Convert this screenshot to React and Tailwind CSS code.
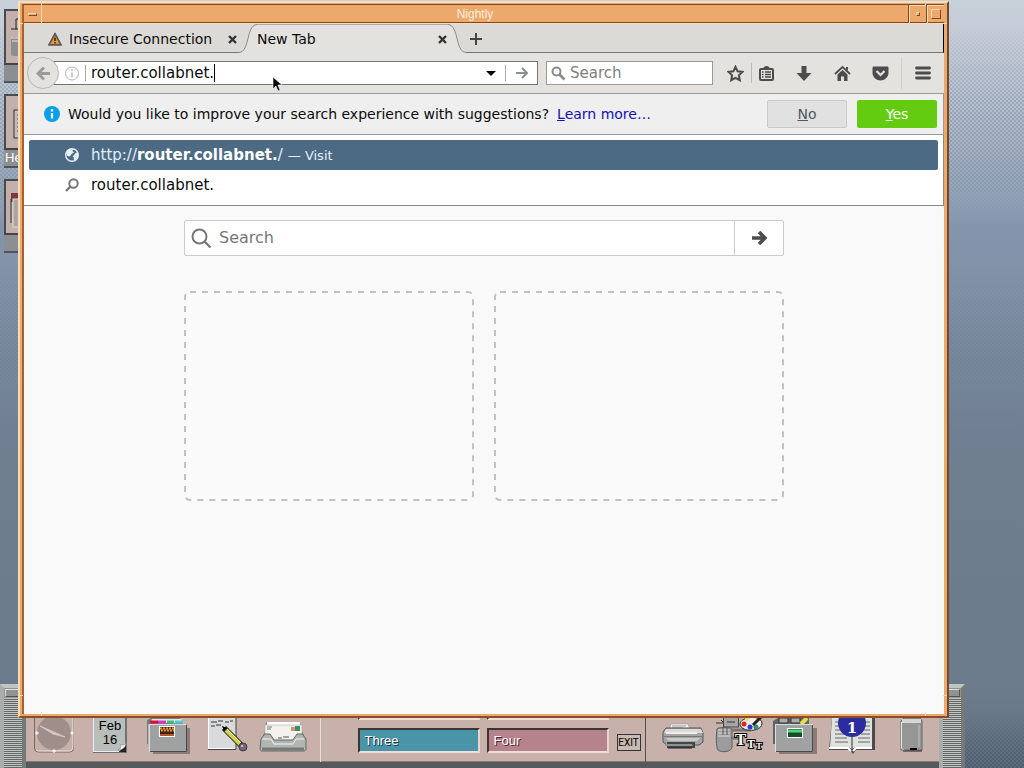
import { useState } from "react";

const Notch = ({ className }) => <span className={`absolute bg-[#fbdcb8] ${className}`} />;

const Desktop = () => (
  <>
    <div className="absolute inset-0 bg-[linear-gradient(#c8d0da_0px,#c4cbd6_40px,#bac3d1_90px,#a9b5c6_140px,#93a3b7_195px,#8494ad_225px,#8393aa_262px,#7b8b9f_340px,#707f93_430px,#6f7e8e_480px,#6c7b8b_700px,#5d6c7b_768px)]" />
    <div className="absolute inset-x-0 top-6 h-48 bg-[conic-gradient(#73849b_25%,transparent_0_50%,#73849b_0_75%,transparent_0)] bg-size-[4px_4px] opacity-40 mask-[linear-gradient(transparent,black_40%,black_80%,transparent)]" />
    <div className="absolute inset-x-0 top-[264px] h-[170px] bg-[conic-gradient(#6c7c92_25%,transparent_0_50%,#6c7c92_0_75%,transparent_0)] bg-size-[4px_4px] opacity-40 mask-[linear-gradient(transparent,black_50%,transparent)]" />
    <div className="absolute inset-x-0 bottom-0 h-[52px] bg-[conic-gradient(#3d4c5b_25%,transparent_0_50%,#3d4c5b_0_75%,transparent_0)] bg-size-[4px_4px] opacity-50 mask-[linear-gradient(transparent,black)]" />
  </>
);

const shortcuts = [
  {
    id: "printer",
    label: "",
    art: (
      <>
        <path d="M10 18V8h8v10M5 18h13" fill="none" stroke="#222" />
        <rect x="5" y="26" width="14" height="19" rx="2" fill="#8f8f8f" />
        <path d="M5 27h14M6 30h10" stroke="#e6e6e6" />
      </>
    ),
  },
  {
    id: "help",
    label: "He",
    art: (
      <>
        <rect x="8" y="14" width="14" height="28" fill="#c4bcb8" stroke="#333" />
        <path d="M11 19h9M11 23h9M11 27h9M11 31h9M11 35h9" stroke="#555" />
      </>
    ),
  },
  {
    id: "trash",
    label: "",
    art: (
      <>
        <rect x="5" y="12" width="15" height="9" fill="#7d3a3d" />
        <rect x="7" y="18" width="14" height="28" fill="#aaa5a1" stroke="#ddd" />
        <path d="M5 18v24" stroke="#333" />
      </>
    ),
  },
];

const DesktopIcons = () => (
  <div className="absolute top-[9px] left-1 flex w-20 flex-col gap-[11px]">
    {shortcuts.map((item) => (
      <div key={item.id}>
        <div className="h-14 border-2 border-t-[#4b4b4d] border-r-[#eee] border-b-[#444] border-l-[#4b4b4d] bg-[#c3afab]">
          <svg className="h-full w-6" viewBox="0 0 24 52">
            {item.art}
          </svg>
        </div>
        <div className="h-[18px] border-b-2 border-[#4b5560] bg-[#8c8f91] pl-px text-[13px] leading-4 text-white">
          {item.label}
        </div>
      </div>
    ))}
  </div>
);

const ClockIcon = () => (
  <svg width="57" height="44" viewBox="0 0 57 44">
    <rect x="8.500" y="-6" width="39" height="40" rx="4" fill="#c6b0aa" stroke="#7e6460" />
    <path d="M10 32c1 1 3 1 4 1h29c3 0 4-2 4-4V0" fill="none" stroke="#efe0da" />
    <circle cx="28" cy="15" r="17" fill="#9f8e89" />
    <path d="M14 8l14 6 11 5-12-3z" fill="#cfc8c4" stroke="#cfc8c4" />
    <path d="M9 15h4M11 13v4M44 15h4M46 13v4M26 33h4M28 31v4" stroke="#fff" />
  </svg>
);

const CalendarIcon = () => (
  <svg width="57" height="44" viewBox="0 0 57 44">
    <path d="M10 0h34v35H10z" fill="#6f7372" />
    <path d="M10 0h32v33H10z" fill="#b9bdbb" />
    <path d="M10.500 0v33M10 33.500h26" stroke="#eee" />
    <path d="M36 34l7-8v8z" fill="#222" />
    <path d="M35 32c3-1 3-4 2-5 3 0 5 0 6-2 0 4-3 7-8 7z" fill="#f2f2f2" stroke="#777" strokeWidth=".5" />
    <text x="27" y="12" textAnchor="middle" fontSize="13" fill="#000">Feb</text>
    <text x="27" y="26" textAnchor="middle" fontSize="13" fill="#000">16</text>
  </svg>
);

const FileIcon = () => (
  <svg width="57" height="44" viewBox="0 0 57 44">
    <path d="M13 10h37v26H13z" fill="#8e7b77" />
    <path d="M7 2l4-2h29l3 6H8v20H7z" fill="#777b7a" />
    <path d="M12 1h29l2 4H10z" fill="#e8e8e4" />
    <path d="M10 4h8" stroke="#d3123a" strokeWidth="3" />
    <path d="M18 4h8" stroke="#d636c8" strokeWidth="3" />
    <path d="M27 4h7" stroke="#35c27b" strokeWidth="3" />
    <path d="M35 4h8" stroke="#4ccbd8" strokeWidth="3" />
    <path d="M9 6h38v28H9z" fill="#9fa2a1" />
    <path d="M9.500 34V6.500H46" fill="none" stroke="#dcdcdc" />
    <path d="M10 33.500h36.500V7" fill="none" stroke="#4a4a4a" />
    <rect x="19.500" y="8.500" width="15" height="10" fill="#3a2313" stroke="#fff" />
    <path d="M20 10.500h14" stroke="#ec9b35" strokeWidth="2" strokeDasharray="2 1" />
    <path d="M21 12.500h13" stroke="#ec9b35" strokeWidth="2" strokeDasharray="2 1" />
    <path d="M20 17h14" stroke="#b7572a" strokeWidth="2" />
  </svg>
);

const NoteIcon = () => (
  <svg width="57" height="44" viewBox="0 0 57 44">
    <path d="M11 0h28v31H11z" fill="#d9dadb" />
    <path d="M11.500 0v30.500H38" fill="none" stroke="#fff" />
    <path d="M11 31.500h28V0" fill="none" stroke="#444" />
    <path d="M14 4h6m1-1h5m2 1h4m1-1h3M14 8h4m1-1h5" stroke="#333" />
    <path d="M27 10l20 20" stroke="#222" strokeWidth="6" />
    <path d="M29 12l14 14" stroke="#d2d04c" strokeWidth="4" />
    <path d="M30 11l14 14" stroke="#f9f7a0" strokeWidth="1" />
    <path d="M25 8l5 2-3 3z" fill="#000" />
    <circle cx="46" cy="29" r="4" fill="#77657c" stroke="#443947" />
    <circle cx="45" cy="28" r="1" fill="#ddd" />
  </svg>
);

const MailIcon = () => (
  <svg width="57" height="44" viewBox="0 0 57 44">
    <path d="M12 4h34l4 16H10z" fill="#8d8f8d" />
    <path d="M13 4h33v4H13z" fill="#fff" />
    <path d="M11 7h37v20H11z" fill="#f3f2ec" stroke="#999" strokeWidth=".5" />
    <path d="M13 9h5M13 11h4" stroke="#777" />
    <path d="M37 9h4v4h-4z" fill="#d79175" />
    <path d="M41 8h5v5h-5z" fill="#3a9166" />
    <path d="M7 21l3-4v-1h6l4 6h19l4-6h6v1l3 4v10c0 1-1 2-2 2H8c-1 0-2-1-2-2z" fill="#b2b6b2" stroke="#626662" />
    <path d="M8 31h42" stroke="#777b78" strokeWidth="3" />
    <path d="M8 21h9l3 5h19l3-5h8" fill="none" stroke="#f0f2ef" />
    <path d="M24 20h4m1-1h6" stroke="#555" />
  </svg>
);

const PrinterIcon = () => (
  <svg width="57" height="44" viewBox="0 0 57 44">
    <path d="M17 6h17l2 6H15z" fill="#f4f2ef" stroke="#888" strokeWidth=".5" />
    <path d="M18 8h14M18 10h11" stroke="#999" />
    <path d="M12 10h35l2 5v9l-4 3H13l-4-3V14z" fill="#a4a6a5" stroke="#555" />
    <path d="M12 11h35l2 4H10z" fill="#dadbd8" />
    <path d="M12 15h31" stroke="#eee" strokeWidth="2" />
    <path d="M10 18.500h38" stroke="#777" />
    <path d="M12 20h34l-3 3H15z" fill="#c9cac8" />
    <path d="M13 24h28v6H13z" fill="#454646" />
    <path d="M12 26h26l1 2H11z" fill="#8f9190" />
    <path d="M14 30h24" stroke="#222" />
  </svg>
);

const StyleIcon = () => (
  <svg width="57" height="44" viewBox="0 0 57 44">
    <path d="M5 5h8M10 2l3 3" stroke="#333" fill="none" />
    <rect x="12.500" y="-4" width="15" height="13" fill="#a5a6a4" stroke="#444" />
    <path d="M16 4h8" stroke="#333" />
    <path d="M6 11c0-2 15-2 15 0v18c0 5-11 6-14 3-2-2-2-16-1-21z" fill="#9b9c9b" stroke="#5c5c5c" />
    <path d="M7 12h12M7 15h12M7 18h12" stroke="#ddd" />
    <path d="M12 10v7M16 10v7" stroke="#555" />
    <path d="M20 12h20M20 20h8" stroke="#777" strokeWidth="3" />
    <path d="M29 6C29-1 50-4 51 5c0 7-10 8-15 7-4-1-7-3-7-6z" fill="#eeeae4" stroke="#222" />
    <circle cx="33" cy="6" r="2.500" fill="#d92828" />
    <circle cx="39" cy="9" r="2.500" fill="#2938ce" />
    <circle cx="45" cy="9" r="2.500" fill="#278f75" />
    <circle cx="36" cy="1" r="2" fill="#ece25a" />
    <path d="M42 7l9-9" stroke="#222" strokeWidth="3" />
    <g fontFamily="'Liberation Serif', serif" fontWeight="bold" fill="#fff" stroke="#000" strokeWidth="2" paintOrder="stroke">
      <text x="24" y="27" fontSize="17">T</text>
      <text x="36" y="30" fontSize="12">T</text>
      <text x="45" y="31" fontSize="9">T</text>
    </g>
  </svg>
);

const AppsIcon = () => (
  <svg width="57" height="44" viewBox="0 0 57 44">
    <path d="M11 10h38v26H11z" fill="#8e7b77" />
    <path d="M5 3l5-3h31v6H7v20H5z" fill="#606463" />
    <path d="M11 0h9v5h-9zM23 0h9v5h-9z" fill="#a9adab" stroke="#333" />
    <path d="M33 6l6-6" stroke="#e2df4a" strokeWidth="4" />
    <path d="M7 6h38v28H7z" fill="#9fa2a1" />
    <path d="M7.500 34V6.500H45" fill="none" stroke="#dcdcdc" />
    <path d="M8 33.500h36.500V7" fill="none" stroke="#4a4a4a" />
    <rect x="19.500" y="10.500" width="15" height="9" fill="#174b2c" stroke="#fff" />
    <path d="M20 13h14" stroke="#4fd87a" strokeWidth="3" />
  </svg>
);

const HelpIcon = () => (
  <svg width="57" height="44" viewBox="0 0 57 44">
    <path d="M7 0h43v32H31l-3 4-3-4H4z" fill="#494c4b" />
    <path d="M7 0h40v29H31l-4 2-4-2H5z" fill="#dfe3df" />
    <path d="M4 30h19l3 3M47 30H31l-3 3" fill="none" stroke="#fff" strokeWidth="2" />
    <path d="M10 4h6M10 8h6M10 12h7M10 16h10M10 20h12M10 24h13M39 4h6M39 8h6M38 12h7M36 16h9M33 20h12M33 24h12" stroke="#666" />
    <path d="M27 17v15" stroke="#333" />
    <circle cx="27" cy="5" r="14" fill="#2a2ca0" />
    <text x="27" y="15" textAnchor="middle" fontFamily="'DejaVu Serif', serif" fontWeight="bold" fontSize="15" fill="#fff">1</text>
  </svg>
);

const TrashIcon = () => (
  <svg width="57" height="44" viewBox="0 0 57 44">
    <path d="M19 3l3-3h16l2 3v29H19z" fill="#949796" stroke="#666" />
    <path d="M20 3h19" stroke="#d6d6d2" strokeWidth="4" />
    <path d="M19.500 4v26l3 3" fill="none" stroke="#e6e6e2" />
    <path d="M37 7v22" stroke="#bfc1c0" />
    <path d="M28 31h7" stroke="#000" strokeWidth="2" />
    <path d="M21 33h19" stroke="#222" />
  </svg>
);

const leftTools = [
  { name: "Clock", Icon: ClockIcon },
  { name: "Calendar", Icon: CalendarIcon },
  { name: "File Manager", Icon: FileIcon },
  { name: "Text Editor", Icon: NoteIcon },
  { name: "Mailer", Icon: MailIcon },
];

const rightTools = [
  { name: "Printers", Icon: PrinterIcon },
  { name: "Style Manager", Icon: StyleIcon },
  { name: "Applications", Icon: AppsIcon },
  { name: "Help", Icon: HelpIcon },
  { name: "Trash", Icon: TrashIcon },
];

const Tools = ({ items }) => (
  <div className="flex">
    {items.map(({ name, Icon }) => (
      <button key={name} aria-label={name}>
        <Icon />
      </button>
    ))}
  </div>
);

const Handle = () => (
  <div className="flex h-full w-[26px] flex-col border-x-4 border-t-4 border-t-[#c1c5c4] border-r-[#747979] border-l-[#a9adac] bg-[#8f9392]">
    <div className="m-px h-2 border border-t-[#ddd] border-r-[#555] border-b-[#555] border-l-[#ddd]" />
    <div className="flex-1 bg-[repeating-linear-gradient(#c3c7c6_0_1px,#626766_1px_2px)]" />
  </div>
);

const bevel = "border-2 border-t-[#3d3532] border-l-[#3d3532] border-r-[#e8d5ce] border-b-[#f0dfd9]";

const FrontPanel = () => (
  <div className="absolute bottom-0 left-0 flex h-[84px] w-[965px] items-end">
    <Handle />
    <div className="flex h-full flex-1 items-end justify-between border-b-[6px] border-[#55595a] bg-[#c8b1aa] shadow-[inset_0_-1px_#8d7a75]">
      <Tools items={leftTools} />
      <div className="flex h-full items-end border-x border-l-[#eadbd5] border-r-[#594b47]">
        <div className="grid grid-cols-2 gap-x-[7px] gap-y-2 pb-[9px] pl-[37px]">
          <div className={`h-6 w-[122px] bg-[#8a7f65] ${bevel}`} />
          <div className={`h-6 w-[122px] bg-[#8a7f65] ${bevel}`} />
          <button className={`h-[25px] w-[122px] bg-[#4994a7] pl-[5px] text-left text-[13px] leading-5 text-white text-shadow-[1px_1px_#234] ${bevel}`}>
            Three
          </button>
          <button className={`h-[25px] w-[122px] bg-[#b5838c] pl-[5px] text-left text-[13px] leading-5 text-white text-shadow-[1px_1px_#523] ${bevel}`}>
            Four
          </button>
        </div>
        <button className="mr-1 mb-[11px] ml-2 h-[17px] w-6 border border-[#333] bg-[#c8b9b3] text-center font-['Roboto',sans-serif] text-[10px] leading-[15px] text-black">
          EXIT
        </button>
      </div>
      <Tools items={rightTools} />
    </div>
    <Handle />
  </div>
);

const titleButton = "flex h-full w-[18px] items-center justify-center border-l border-[#7d4a24] shadow-[inset_1px_1px_#fbdcb8]";

const TitleBar = () => (
  <div className="flex h-[19px] items-center border-b border-[#fbdcb8] bg-[#eda86c] shadow-[inset_0_-1px_#7d4a24]">
    <button aria-label="Window menu" className="flex h-full w-[18px] items-center justify-center border-r border-[#fbdcb8]">
      <span className="h-[3px] w-[9px] border border-t-[#fbdcb8] border-r-[#7d4a24] border-b-[#7d4a24] border-l-[#fbdcb8]" />
    </button>
    <h1 className="flex-1 text-center text-[12px] leading-4 text-[#fdf0dc]">Nightly</h1>
    <button aria-label="Minimize" className={titleButton}>
      <span className="size-1 border border-t-[#fbdcb8] border-r-[#7d4a24] border-b-[#7d4a24] border-l-[#fbdcb8]" />
    </button>
    <button aria-label="Maximize" className={titleButton}>
      <span className="size-[10px] border border-t-[#fbdcb8] border-r-[#7d4a24] border-b-[#7d4a24] border-l-[#fbdcb8]" />
    </button>
  </div>
);

const CloseIcon = () => (
  <svg width="9" height="9" viewBox="0 0 9 9">
    <path d="M1 1l7 7M8 1l-7 7" stroke="#333" strokeWidth="2.400" />
  </svg>
);

const TabStrip = () => (
  <div className="flex h-[29px] bg-[#dcdad6] text-sm">
    <div className="flex w-[215px] items-center border-b border-[#777] pt-0.5 pl-6">
      <svg width="14" height="14" viewBox="0 0 14 14">
        <path d="M7 .8L13.600 13.200H.4z" fill="#5d5a55" stroke="#5d5a55" strokeLinejoin="round" />
        <path d="M7 3.500L11.500 12h-9z" fill="#f0953a" />
        <path d="M7 5.500v3.500M7 10v1.500" stroke="#3c2a1a" strokeWidth="1.600" />
      </svg>
      <span className="ml-[7px] flex-1 whitespace-nowrap">Insecure Connection</span>
      <button aria-label="Close Insecure Connection" className="mr-0.5">
        <CloseIcon />
      </button>
    </div>
    <svg width="18" height="29" viewBox="0 0 18 29">
      <path d="M0 28.500C11 28 7 1 18 .5V29H0z" fill="#e4e2df" />
      <path d="M0 28.500C11 28 7 1 18 .5" fill="none" stroke="#8a8a88" />
    </svg>
    <div className="flex w-[191px] items-center justify-between border-t border-[#aaa] bg-[#e4e2df]">
      <span>New Tab</span>
      <button aria-label="Close New Tab" className="mr-px">
        <CloseIcon />
      </button>
    </div>
    <svg width="18" height="29" viewBox="0 0 18 29">
      <path d="M0 .5C11 1 7 28 18 28.500V29H0z" fill="#e4e2df" />
      <path d="M0 .5C11 1 7 28 18 28.500" fill="none" stroke="#8a8a88" />
    </svg>
    <div className="flex flex-1 items-center border-r border-b border-[#777] border-r-black pt-0.5 pl-1">
      <button aria-label="New tab">
        <svg width="12" height="12" viewBox="0 0 12 12">
          <path d="M6 0v12M0 6h12" stroke="#444" strokeWidth="2" />
        </svg>
      </button>
    </div>
  </div>
);

const toolIcons = [
  {
    name: "Downloads",
    art: <path d="M5.500 1h5v7h5L8 16 .5 8h5z" fill="#4c4c4c" />,
  },
  {
    name: "Home",
    art: (
      <>
        <path d="M1 9l7.500-7L16 9" fill="none" stroke="#4c4c4c" strokeWidth="1.800" />
        <path d="M12 2h2v4l-2-2z" fill="#4c4c4c" />
        <path d="M3.500 9.500l5-4.500 5 4.500V16H10v-4.500H7V16H3.500z" fill="#4c4c4c" />
      </>
    ),
  },
  {
    name: "Pocket",
    art: (
      <>
        <path d="M2 1.500h13c1 0 1.500.5 1.500 1.500v5c0 4-4 7.500-8 7.500S.5 12 .5 8V3c0-1 .5-1.500 1.500-1.500z" fill="#4c4c4c" />
        <path d="M4.500 6l4 4 4-4" fill="none" stroke="#e4e2df" strokeWidth="2.200" />
      </>
    ),
  },
];

const Toolbar = ({ url, setUrl, query, setQuery }) => (
  <div className="flex h-[41px] items-center border-b border-[#999] bg-[#e4e2df] pl-[3px]">
    <button aria-label="Back" className="relative z-10 flex size-8 items-center justify-center rounded-full border border-[#bab8b5] bg-[#e4e2df]">
      <svg width="15" height="15" viewBox="0 0 15 15">
        <path d="M14 7.500H3M8 1.500l-6 6 6 6" fill="none" stroke="#9c9b99" strokeWidth="3" />
      </svg>
    </button>
    <div className="-ml-2 flex h-6 w-[487px] items-center border border-l-0 border-[#707678] bg-white pl-[14px]">
      <svg width="15" height="15" viewBox="0 0 15 15">
        <circle cx="7" cy="7.500" r="6.500" fill="none" stroke="#b5b5b5" />
        <path d="M7 6.500v5M7 3.500v1.500" stroke="#b5b5b5" strokeWidth="1.400" />
      </svg>
      <span className="mr-[5px] ml-[5px] h-4 w-px bg-[#aaa]" />
      <input
        aria-label="Address"
        className="field-sizing-content outline-none"
        value={url}
        onChange={(e) => setUrl(e.target.value)}
      />
      <span className="h-[18px] w-px bg-black" />
      <button aria-label="Show history" className="ml-auto">
        <svg width="10" height="5" viewBox="0 0 10 5">
          <path d="M0 0h10L5 5z" fill="#000" />
        </svg>
      </button>
      <span className="mr-[10px] ml-[9px] h-4 w-px bg-[#aaa]" />
      <button aria-label="Go" className="mr-[9px]">
        <svg width="12" height="12" viewBox="0 0 12 12">
          <path d="M0 6h10M6 1l5 5-5 5" fill="none" stroke="#8a9090" strokeWidth="2" />
        </svg>
      </button>
    </div>
    <label className="ml-2 flex h-6 w-[167px] items-center border border-[#999] bg-white pl-1">
      <svg width="15" height="15" viewBox="0 0 15 15">
        <circle cx="5.500" cy="5.500" r="4" fill="none" stroke="#8a8a8a" strokeWidth="2" />
        <path d="M8.500 8.500l5 5" stroke="#8a8a8a" strokeWidth="2.600" />
      </svg>
      <input
        aria-label="Search the web"
        placeholder="Search"
        className="ml-1 w-0 flex-1 outline-none placeholder:text-[#808080]"
        value={query}
        onChange={(e) => setQuery(e.target.value)}
      />
    </label>
    <div className="ml-auto flex items-center pr-[13px]">
      <button aria-label="Bookmark this page">
        <svg width="17" height="17" viewBox="0 0 17 17">
          <path d="M8.500 1.800l2.100 4.500 4.900.6-3.600 3.400.9 4.900-4.300-2.400-4.300 2.400.9-4.900L1.500 6.900l4.900-.6z" fill="none" stroke="#4c4c4c" strokeWidth="2" />
        </svg>
      </button>
      <span className="mx-[7px] h-5 w-px bg-[#bbb]" />
      <button aria-label="Bookmarks" className="mr-[21px]">
        <svg width="16" height="17" viewBox="0 0 16 17">
          <path d="M4.500 3.500a3 2.500 0 016 0z" fill="#4c4c4c" />
          <rect x="1" y="4" width="13" height="11" rx="1" fill="#e4e2df" stroke="#4c4c4c" strokeWidth="2" />
          <path d="M3 7h1.500M6 7h6M3 9.500h1.500M6 9.500h6M3 12h1.500M6 12h6" stroke="#4c4c4c" strokeWidth="1.500" />
        </svg>
      </button>
      <div className="flex gap-[21px]">
        {toolIcons.map((item) => (
          <button key={item.name} aria-label={item.name}>
            <svg width="17" height="17" viewBox="0 0 17 17">
              {item.art}
            </svg>
          </button>
        ))}
      </div>
      <span className="mr-[13px] ml-3 h-8 w-px bg-[#cfcdca]" />
      <button aria-label="Open menu">
        <svg width="16" height="14" viewBox="0 0 16 14">
          <path d="M1.500 2h13M1.500 7h13M1.500 12h13" stroke="#4c4c4c" strokeWidth="2.800" strokeLinecap="round" />
        </svg>
      </button>
    </div>
  </div>
);

const SuggestionsNotice = () => (
  <div className="flex h-[41px] items-center border-r border-b border-[#999] bg-[#efefef] pr-[6px] pl-5 text-sm">
    <svg width="16" height="16" viewBox="0 0 16 16">
      <circle cx="8" cy="8" r="8" fill="#0a9fe8" />
      <path d="M8 7v5.500M8 3v2.500" stroke="#fff" strokeWidth="2.200" />
    </svg>
    <p className="ml-2 flex flex-1 gap-2 whitespace-nowrap">
      Would you like to improve your search experience with suggestions?
      <a href="#learn" className="text-[#1410b8]">
        <u>L</u>earn more…
      </a>
    </p>
    <button className="h-7 w-20 rounded-xs border border-[#c9c9cb] bg-[#e1e1e2] text-[#55565a]">
      <u>N</u>o
    </button>
    <button className="ml-[10px] h-7 w-20 rounded-xs bg-[#64cc10] text-white">
      <u>Y</u>es
    </button>
  </div>
);

const Results = () => (
  <ul className="border-r border-b border-[#888] bg-white px-[5px] py-[5px]">
    <li className="flex h-[30px] items-center rounded-xs bg-[#4d6a84] pl-9 text-[#e4eef8]">
      <svg width="14" height="14" viewBox="0 0 14 14">
        <circle cx="7" cy="7" r="6.300" fill="#4d6a84" stroke="#e8f1f8" strokeWidth="1.400" />
        <path d="M1 5l3-3.500 4-.5-.5 2L9 4.500 6.500 6 5 8.500 2.500 8zM9 7l2-2.500 2 .5v4l-3 3.500-1.500-1.500.5-1.500-1.500-1z" fill="#e8f1f8" />
      </svg>
      <span className="ml-3">
        http://<b className="text-white">router.collabnet.</b>/
      </span>
      <span className="ml-[5px] pt-px text-[13px]">— Visit</span>
    </li>
    <li className="flex h-[30px] items-center pl-9">
      <svg width="14" height="14" viewBox="0 0 14 14">
        <circle cx="8.500" cy="5.500" r="4.200" fill="none" stroke="#777" strokeWidth="2" />
        <path d="M5.500 8.500L1 13" stroke="#777" strokeWidth="2.400" />
      </svg>
      <span className="ml-3">router.collabnet.</span>
    </li>
  </ul>
);

const Tile = () => (
  <div className="h-[210px] flex-1">
    <svg className="size-full" viewBox="0 0 290 210">
      <rect x="1" y="1" width="288" height="208" rx="5" fill="#fafafa" stroke="#c1c1c1" strokeWidth="2" strokeDasharray="6 6" />
    </svg>
  </div>
);

const NewTabPage = () => (
  <main className="flex-1 bg-[#f9f9f9] pt-[14px]">
    <div className="mx-auto w-[600px]">
      <form className="flex h-9 rounded-xs border border-[#cbcbcb] bg-white" onSubmit={(e) => e.preventDefault()}>
        <label className="flex flex-1 items-center pl-[6px]">
          <svg width="21" height="21" viewBox="0 0 21 21">
            <circle cx="8.500" cy="8.500" r="7" fill="none" stroke="#777" strokeWidth="2" />
            <path d="M13.500 13.500l6 6" stroke="#777" strokeWidth="2.400" />
          </svg>
          <input
            aria-label="Search"
            placeholder="Search"
            className="ml-[7px] flex-1 text-base outline-none placeholder:text-[#777]"
          />
        </label>
        <button aria-label="Submit search" className="flex w-[49px] items-center justify-center border-l border-[#cbcbcb]">
          <svg width="16" height="16" viewBox="0 0 16 16">
            <path d="M1 8h12M8 2l6 6-6 6" fill="none" stroke="#4d4d4d" strokeWidth="3.600" />
          </svg>
        </button>
      </form>
      <div className="mt-[35px] flex gap-5">
        <Tile />
        <Tile />
      </div>
    </div>
  </main>
);

const BrowserWindow = () => {
  const [url, setUrl] = useState("router.collabnet.");
  const [query, setQuery] = useState("");

  return (
    <div className="absolute top-px right-[75px] bottom-[50px] left-[18px] border-2 border-t-[#fbdcb8] border-r-[#6f4a32] border-b-[#8a4f26] border-l-[#fbdcb8] bg-[#eda86c] pt-px pr-[3px] pb-0.5 pl-0.5">
      <div className="flex h-full flex-col border-t border-l-2 border-t-[#7d4a24] border-l-[#a5622f]">
        <TitleBar />
        <div className="flex flex-1 flex-col font-['DejaVu_Sans',sans-serif] text-[15px] leading-5 text-[#0c0c0c]">
          <TabStrip />
          <Toolbar url={url} setUrl={setUrl} query={query} setQuery={setQuery} />
          <SuggestionsNotice />
          <Results />
          <NewTabPage />
        </div>
      </div>
      <Notch className="-top-px left-[21px] h-1 w-px" />
      <Notch className="-top-px right-[21px] h-1 w-px" />
      <Notch className="top-5 -left-px h-px w-1" />
      <Notch className="top-5 right-0 h-px w-1" />
      <Notch className="bottom-5 -left-px h-px w-1" />
      <Notch className="right-0 bottom-5 h-px w-1" />
      <Notch className="bottom-0 left-[21px] h-1 w-px" />
      <Notch className="right-[21px] bottom-0 h-1 w-px" />
    </div>
  );
};

const Cursor = () => (
  <svg className="pointer-events-none absolute top-[76px] left-[272px]" width="11" height="17" viewBox="0 0 11 17">
    <path d="M1 1v12l3-3 2 5 2-1-2-5h4z" fill="#000" stroke="#fff" strokeWidth=".6" />
  </svg>
);

const App = () => {
  return (
    <div className="relative h-screen overflow-hidden font-['Liberation_Sans',sans-serif]">
      <Desktop />
      <DesktopIcons />
      <FrontPanel />
      <BrowserWindow />
      <Cursor />
    </div>
  );
};

export default App;
